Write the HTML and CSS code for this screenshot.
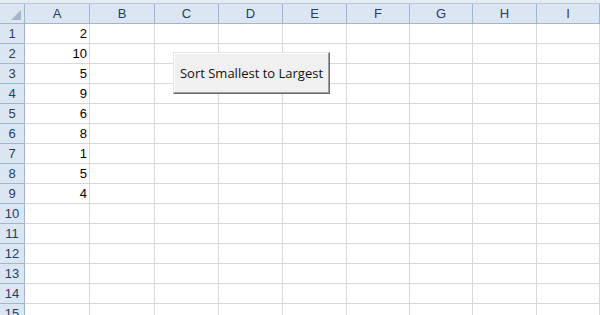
FILE: index.html
```html
<!DOCTYPE html>
<html lang="en">
<head>
    <meta charset="UTF-8">
    <title>Sort Smallest to Largest</title>
    <link rel="stylesheet" href="styles.css">
</head>
<body>

    <!-- thin band above the column headers -->
    <div class="top-band"></div>

    <div class="sheet">
        <!-- Worksheet grid, filled in below -->
        <div id="grid" class="grid"></div>

        <!-- The macro button floating over the cells -->
        <button class="sort-button">Sort Smallest to Largest</button>
    </div>

    <script>
        const columns = ['A', 'B', 'C', 'D', 'E', 'F', 'G', 'H', 'I'];
        const values = [2, 10, 5, 9, 6, 8, 1, 5, 4];
        const totalRows = 15;
        const grid = document.getElementById('grid');

        // header row
        let html = '<div class="cell corner"><span class="corner-mark"></span></div>';
        columns.forEach(col => {
            html += `<div class="cell col-head">${col}</div>`;
        });

        // data rows
        for (let r = 1; r <= totalRows; r++) {
            html += `<div class="cell row-head">${r}</div>`;
            columns.forEach((col, i) => {
                const v = (i === 0 && values[r - 1] !== undefined) ? values[r - 1] : '';
                html += `<div class="cell data">${v}</div>`;
            });
        }

        grid.innerHTML = html;
    </script>

</body>
</html>
```

FILE: styles.css
```css
body {
    margin: 0;
    background: #ffffff;
    font-family: "Liberation Sans", Arial, sans-serif;
    overflow: hidden;
}
.top-band {
    height: 3px;
    background: #e4ebf4;
    border-bottom: 1px solid #b8c7da;
}
.sheet {
    position: relative;
}
.grid {
    display: grid;
    grid-template-columns: 25px 65px 65px 64px 64px 64px 63px 63px 64px 63px;
    grid-auto-rows: 20px;
}
.cell {
    box-sizing: border-box;
    border-right: 1px solid #d8d8d8;
    border-bottom: 1px solid #d8d8d8;
    font-size: 13px;
    line-height: 19px;
    color: #000000;
}
.data {
    text-align: right;
    padding-right: 2px;
}
.col-head,
.row-head,
.corner {
    background: #dce6f2;
    color: #253e60;
    text-align: center;
    border-right: 1px solid #9eb6ce;
    border-bottom: 1px solid #9eb6ce;
}
.corner {
    position: relative;
}
.corner-mark {
    position: absolute;
    right: 3px;
    bottom: 3px;
    width: 0;
    height: 0;
    border-left: 10px solid transparent;
    border-bottom: 10px solid #a6b5ca;
}
.sort-button {
    position: absolute;
    left: 173px;
    top: 48px;
    width: 157px;
    height: 42px;
    padding: 0;
    background: #f0f0f0;
    border: 1px solid;
    border-color: #e3e3e3 #696969 #696969 #e3e3e3;
    box-shadow: inset -1px -1px 0 #a0a0a0, inset 1px 1px 0 #ffffff;
    font-family: "Open Sans", "Liberation Sans", sans-serif;
    font-size: 13px;
    color: #111111;
}
```
